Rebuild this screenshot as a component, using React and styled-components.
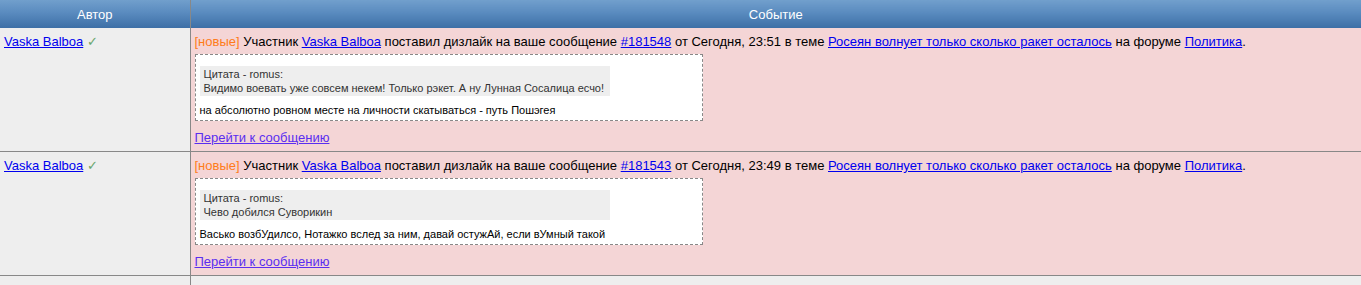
import React from 'react';
import styled, { createGlobalStyle } from 'styled-components';

const GlobalStyle = createGlobalStyle`
  body {
    margin: 0;
    background: #ffffff;
    font-family: "Liberation Sans", Arial, sans-serif;
    font-size: 13px;
  }
`;

const events = [
  {
    author: 'Vaska Balboa',
    post: '#181548',
    time: 'Сегодня, 23:51',
    topic: 'Росеян волнует только сколько ракет осталось',
    forum: 'Политика',
    quoteAuthor: 'romus',
    quote: 'Видимо воевать уже совсем некем! Только рэкет. А ну Лунная Сосалица есчо!',
    reply: 'на абсолютно ровном месте на личности скатываться - путь Пошэгея',
  },
  {
    author: 'Vaska Balboa',
    post: '#181543',
    time: 'Сегодня, 23:49',
    topic: 'Росеян волнует только сколько ракет осталось',
    forum: 'Политика',
    quoteAuthor: 'romus',
    quote: 'Чево добился Суворикин',
    reply: 'Васько возбУдилсо, Нотажко вслед за ним, давай остужАй, если вУмный такой',
  },
];

function App() {
  return (
    <>
      <GlobalStyle />
      <Table>
        <thead>
          <tr>
            <HeadCell $width='190px'>Автор</HeadCell>
            <HeadCell>Событие</HeadCell>
          </tr>
        </thead>
        <tbody>
          {events.map((e) => (
            <tr key={e.post}>
              <AuthorCell>
                <Link href='#'>{e.author}</Link> <Check>✓</Check>
              </AuthorCell>
              <EventCell>
                <Line>
                  <New>[новые]</New> Участник <Link href='#'>{e.author}</Link>{' '}
                  поставил дизлайк на ваше сообщение <Link href='#'>{e.post}</Link>{' '}
                  от {e.time} в теме <Link href='#'>{e.topic}</Link> на форуме{' '}
                  <Link href='#'>{e.forum}</Link>.
                </Line>
                <PostBox>
                  <Quote>
                    Цитата - {e.quoteAuthor}:
                    <br />
                    {e.quote}
                  </Quote>
                  <Reply>{e.reply}</Reply>
                </PostBox>
                <GoLink href='#'>Перейти к сообщению</GoLink>
              </EventCell>
            </tr>
          ))}
          <tr>
            <AuthorCell>
              <Link href='#'>Vaska Balboa</Link> <Check>✓</Check>
            </AuthorCell>
            <EventCell $plain />
          </tr>
        </tbody>
      </Table>
    </>
  );
}

const Table = styled.table`
  width: 100%;
  border-collapse: collapse;
  table-layout: fixed;
`;

const HeadCell = styled.th`
  width: ${(p) => p.$width || 'auto'};
  height: 28px;
  padding: 0 4px;
  box-sizing: border-box;
  background: linear-gradient(to bottom, #719fcc 0%, #5a8bbf 45%, #3d6fa6 100%);
  color: #ffffff;
  font-weight: normal;
  font-size: 13px;
  text-align: center;
  border-left: 1px solid #888888;
  &:first-child {
    border-left: 0;
  }
`;

const AuthorCell = styled.td`
  background: #eeeeee;
  vertical-align: top;
  padding: 6px 4px 4px 4px;
  border-bottom: 1px solid #888888;
  border-right: 1px solid #888888;
  line-height: 15px;
`;

const EventCell = styled.td`
  background: ${(p) => (p.$plain ? '#eeeeee' : '#f4d5d6')};
  vertical-align: top;
  padding: 6px 4px 6px 4px;
  border-bottom: 1px solid #888888;
  line-height: 15px;
  color: #000000;
`;

const Line = styled.div`
  line-height: 15px;
`;

const Link = styled.a`
  color: #0000ee;
  text-decoration: underline;
`;

const GoLink = styled.a`
  display: inline-block;
  margin-top: 9px;
  color: #5a2ef0;
  text-decoration: underline;
`;

const Check = styled.span`
  color: #6aa56a;
`;

const New = styled.span`
  color: #ff7c1a;
`;

const PostBox = styled.div`
  width: 508px;
  box-sizing: border-box;
  margin-top: 5px;
  padding: 11px 4px 3px 4px;
  background: #ffffff;
  border: 1px dashed #888888;
  font-size: 11px;
  line-height: 14px;
`;

const Quote = styled.div`
  width: 410px;
  box-sizing: border-box;
  padding: 1px 4px 1px 4px;
  background: #eeeeee;
  color: #333333;
`;

const Reply = styled.div`
  margin-top: 7px;
  color: #000000;
`;

export default App;
